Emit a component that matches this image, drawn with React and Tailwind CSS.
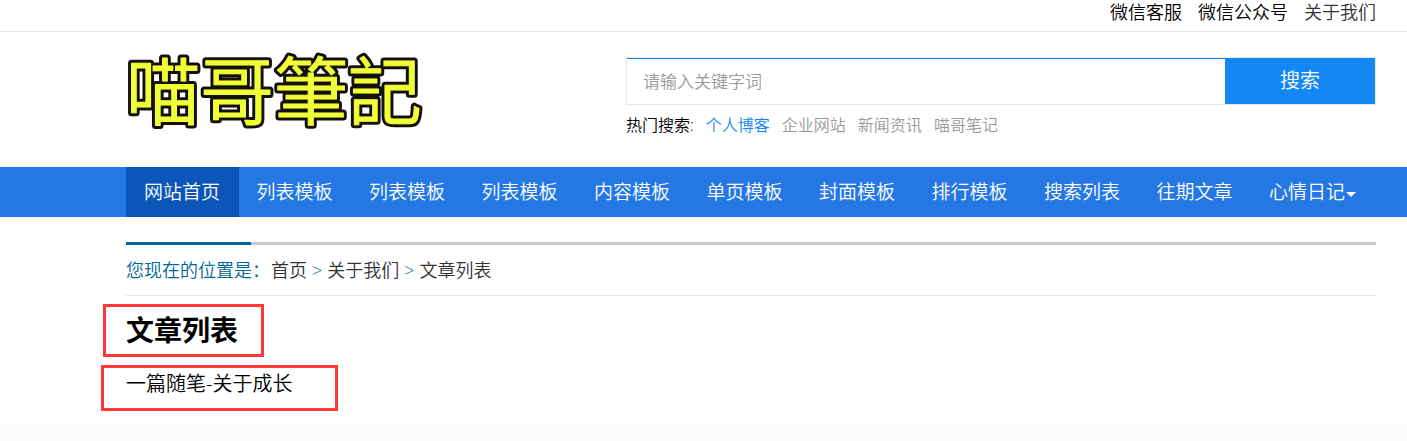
import React from 'react';

const topLinks = [
    { label: '微信客服', className: 'text-black' },
    { label: '微信公众号', className: 'text-black' },
    { label: '关于我们', className: 'text-[#333]' },
];

const hotWords = ['个人博客', '企业网站', '新闻资讯', '喵哥笔记'];

const navItems = [
    '网站首页',
    '列表模板',
    '列表模板',
    '列表模板',
    '内容模板',
    '单页模板',
    '封面模板',
    '排行模板',
    '搜索列表',
    '往期文章',
    '心情日记',
];

function Logo() {
    return (
        <a href="#" aria-label="喵哥筆記" className="block">
            <svg width="300" height="79" viewBox="0 0 300 79" className="block overflow-visible">
                <g
                    fontFamily="'Noto Sans CJK TC', sans-serif"
                    fontSize="74"
                    fontWeight="350"
                    strokeLinejoin="round"
                    strokeLinecap="round"
                    transform="translate(0 67)"
                >
                    <text stroke="#14100c" strokeWidth="7" fill="#14100c">喵哥筆記</text>
                    <text stroke="#f0ff38" strokeWidth="1" fill="#f0ff38" aria-hidden="true">喵哥筆記</text>
                </g>
            </svg>
        </a>
    );
}

function TopBar() {
    return (
        <div className="border-b border-[#e8e8e8] pl-[126px] pr-[31px] pb-[7px]">
            <ul className="flex justify-end gap-4 text-[18px] leading-6">
                {topLinks.map((item) => (
                    <li key={item.label}>
                        <a href="#" className={item.className}>{item.label}</a>
                    </li>
                ))}
            </ul>
        </div>
    );
}

function Search() {
    return (
        <div className="w-3/5 pt-[5px]">
            <form className="flex h-12 border border-[#e8e8e8]" onSubmit={(e) => e.preventDefault()}>
                <input
                    type="text"
                    aria-label="请输入关键字词"
                    placeholder="请输入关键字词"
                    className="min-w-0 flex-1 border-t border-[#1487f4] px-4 text-[17px] outline-none placeholder:text-[#999]"
                />
                <button type="submit" className="w-[150px] bg-[#1487f4] text-[20px] text-white">搜索</button>
            </form>
            <div className="mt-2 flex gap-3 text-[16px] leading-6">
                <span className="text-black">热门搜索:</span>
                {hotWords.map((word, i) => (
                    <a key={word} href="#" className={i === 0 ? 'text-[#1487f4]' : 'text-[#999]'}>{word}</a>
                ))}
            </div>
        </div>
    );
}

function Nav() {
    return (
        <nav className="bg-[#2577e3] pl-[126px] pr-[31px]">
            <ul className="flex text-[19px] leading-[50px] text-white">
                {navItems.map((label, i) => (
                    <li key={i} className={i === 0 ? 'w-[9%] bg-[#0c56b9]' : 'w-[9%]'}>
                        <a href="#" className="flex items-center pl-[18px] whitespace-nowrap">
                            {label}
                            {i === navItems.length - 1 && (
                                <svg width="10" height="5" viewBox="0 0 10 5" className="ml-px mt-1 shrink-0" aria-hidden="true">
                                    <path d="M0 0h10L5 5z" fill="currentColor" />
                                </svg>
                            )}
                        </a>
                    </li>
                ))}
            </ul>
        </nav>
    );
}

function Breadcrumb() {
    return (
        <div>
            <div className="h-[3px] bg-[#c9c9c9]">
                <div className="h-full w-1/10 bg-[#006699]" />
            </div>
            <div className="flex gap-[5px] border-b border-[#e8e8e8] text-[18px] leading-[50px] text-[#006699]">
                <span className="-mr-1">您现在的位置是：</span>
                <a href="#" className="text-[#333]">首页</a>
                <span>&gt;</span>
                <a href="#" className="text-[#333]">关于我们</a>
                <span>&gt;</span>
                <a href="#" className="text-[#333]">文章列表</a>
            </div>
        </div>
    );
}

export default function App() {
    return (
        <div className="flex min-h-screen flex-col bg-white font-['Open_Sans','Noto_Sans_CJK_SC',sans-serif] font-[350]">
            <TopBar />
            <header className="flex justify-between pl-[126px] pr-[31px] pt-5 pb-[30px]">
                <Logo />
                <Search />
            </header>
            <Nav />
            <main className="pl-[126px] pr-[31px] pt-[25px] pb-3 text-black">
                <Breadcrumb />
                <h1 className="mt-2 -ml-[23px] w-fit border-3 border-[#ff3737] pl-5 pr-[23px] text-[28px] leading-[47px] font-bold">
                    文章列表
                </h1>
                <div className="mt-2 -ml-[25px] w-fit border-3 border-[#ff3737] pl-[22px] pr-[43px] pb-2 text-[20px] leading-8">
                    <a href="#">一篇随笔-关于成长</a>
                </div>
            </main>
            <footer className="flex-1 bg-[#fbfbfb]" />
        </div>
    );
}
